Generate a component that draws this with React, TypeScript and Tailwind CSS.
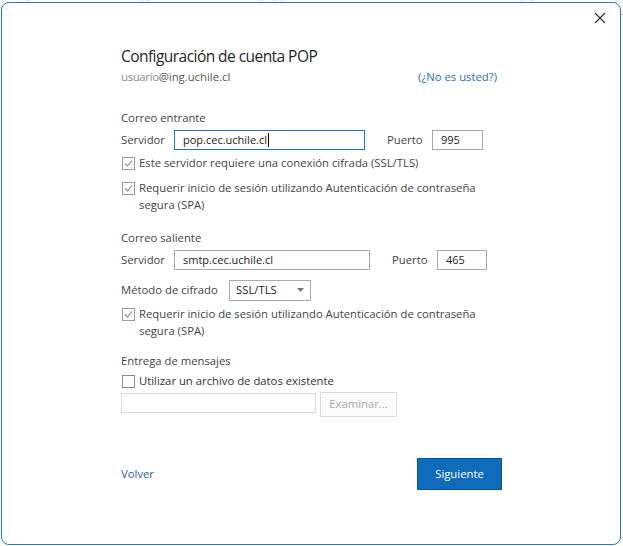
import React from "react";

const Check = () => (
  <div className="mt-[3px] ml-[1px] w-[13px] h-[13px] border border-[#9a9a9a] bg-white flex items-center justify-center shrink-0">
    <svg width="11" height="11" viewBox="0 0 11 11">
      <polyline points="2,5.5 4.5,8 9,2.5" fill="none" stroke="#8a8a8a" strokeWidth="1.1" />
    </svg>
  </div>
);

const Empty = () => (
  <div className="mt-[3px] ml-[1px] w-[13px] h-[13px] border border-[#8a8a8a] bg-white shrink-0" />
);

export default function App() {
  const font = { fontFamily: '"Open Sans", "Noto Sans", sans-serif' };
  return (
    <div className="w-[623px] h-[546px] bg-white relative overflow-hidden" style={font}>
      {/* background window edges */}
      <div className="absolute top-0 left-[28px] w-px h-[3px] bg-[#d0d0d0]" />
      <div className="absolute top-0 left-[142px] w-px h-[3px] bg-[#d0d0d0]" />
      <div className="absolute top-0 left-[148px] w-px h-[3px] bg-[#d0d0d0]" />
      <div className="absolute top-0 left-[261px] w-px h-[3px] bg-[#d0d0d0]" />
      <div className="absolute top-0 left-[274px] w-px h-[3px] bg-[#d0d0d0]" />
      <div className="absolute top-0 left-[281px] w-px h-[3px] bg-[#d0d0d0]" />
      <div className="absolute top-0 left-[521px] w-px h-[3px] bg-[#d0d0d0]" />
      <div className="absolute top-0 left-[532px] w-px h-[3px] bg-[#d0d0d0]" />
      <div className="absolute top-[14px] right-0 w-[2px] h-px bg-[#c8c8c8]" />

      <div className="relative ml-[1px] mt-[2px] w-[620px] h-[543px] border border-[#2a78c6] rounded-[8px] bg-white">
        <svg className="absolute right-[14px] top-[9px]" width="12" height="12" viewBox="0 0 12 12">
          <path d="M1 1 L11 11 M11 1 L1 11" stroke="#333" strokeWidth="1.2" />
        </svg>

        <div className="pl-[119px] pt-[41px] text-[11.3px] text-[#444]">
          <div className="h-[24px] leading-[24px] text-[15.5px] tracking-[-0.55px] text-[#262626]">Configuración de cuenta POP</div>
          <div className="w-[376px] h-[18px] leading-[18px] flex justify-between">
            <span>
              <span className="text-[#8a8a8a] tracking-[-0.3px]">usuario</span>
              <span className="text-[#555]">@ing.uchile.cl</span>
            </span>
            <span className="text-[#2f6db5]">(¿No es usted?)</span>
          </div>

          <div className="mt-[23px] h-[18px] leading-[18px]">Correo entrante</div>
          <div className="mt-[3px] h-[20px] flex items-center">
            <span className="w-[53px]">Servidor</span>
            <div className="w-[191px] h-[20px] border border-[#1f74c4] flex items-center pl-[8px] text-[#222] text-[11px]">
              pop.cec.uchile.cl<span className="inline-block w-px h-[14px] bg-black ml-[1px]" />
            </div>
            <span className="ml-[22px] w-[45px]">Puerto</span>
            <div className="w-[51px] h-[20px] border border-[#ababab] flex items-center pl-[8px] text-[#222] text-[11px]">995</div>
          </div>

          <div className="mt-[4px] flex items-start leading-[18px]">
            <Check />
            <span className="ml-[4px]">Este servidor requiere una conexión cifrada (SSL/TLS)</span>
          </div>
          <div className="mt-[7px] flex items-start leading-[17px]">
            <Check />
            <span className="ml-[4px] w-[362px]">Requerir inicio de sesión utilizando Autenticación de contraseña segura (SPA)</span>
          </div>

          <div className="mt-[16px] h-[18px] leading-[18px]">Correo saliente</div>
          <div className="mt-[3px] h-[20px] flex items-center">
            <span className="w-[53px]">Servidor</span>
            <div className="w-[196px] h-[20px] border border-[#ababab] flex items-center pl-[8px] text-[#222] text-[11px]">
              smtp.cec.uchile.cl
            </div>
            <span className="ml-[22px] w-[45px]">Puerto</span>
            <div className="w-[50px] h-[20px] border border-[#ababab] flex items-center pl-[8px] text-[#222] text-[11px]">465</div>
          </div>

          <div className="mt-[10px] h-[20px] flex items-center">
            <span className="w-[108px]">Método de cifrado</span>
            <div className="w-[82px] h-[21px] border border-[#ababab] flex items-center justify-between pl-[6px] pr-[6px] text-[#222]">
              <span>SSL/TLS</span>
              <svg width="7" height="4" viewBox="0 0 7 4">
                <path d="M0 0 L7 0 L3.5 4 Z" fill="#777" />
              </svg>
            </div>
          </div>

          <div className="mt-[5px] flex items-start leading-[17px]">
            <Check />
            <span className="ml-[4px] w-[362px]">Requerir inicio de sesión utilizando Autenticación de contraseña segura (SPA)</span>
          </div>

          <div className="mt-[13px] h-[18px] leading-[18px]">Entrega de mensajes</div>
          <div className="mt-[2px] flex items-start leading-[18px]">
            <Empty />
            <span className="ml-[4px] text-[#333]">Utilizar un archivo de datos existente</span>
          </div>
          <div className="mt-[2px] flex items-start">
            <div className="mt-[1px] w-[195px] h-[20px] border border-[#d9d9d9]" />
            <div className="ml-[4px] w-[77px] h-[25px] border border-[#dcdcdc] bg-[#fbfbfb] flex items-center justify-center text-[#a8a8a8]">
              Examinar...
            </div>
          </div>

          <div className="mt-[41px] w-[381px] flex items-center justify-between">
            <span className="text-[#2a5f9e]">Volver</span>
            <div className="w-[85px] h-[32px] bg-[#0f6cbd] border border-[#0b559a] flex items-center justify-center text-white">
              Siguiente
            </div>
          </div>
        </div>
      </div>
    </div>
  );
}
